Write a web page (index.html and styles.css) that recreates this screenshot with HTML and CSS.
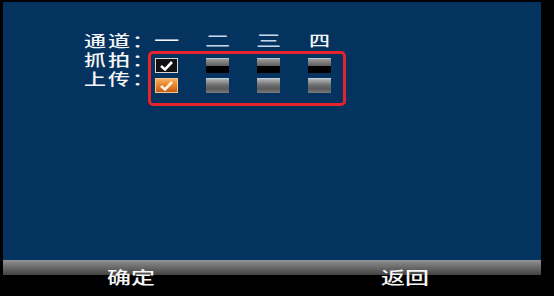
FILE: index.html
```html
<!DOCTYPE html>
<html lang="zh">
	<head>
		<meta charset="UTF-8">
		<title>抓拍设置</title>
		<link rel="stylesheet" href="styles.css">
	</head>
	<body>
	<div class="panel">
		<div class="row head">
			<span class="label"><span class="txt">通道：</span></span>
			<span class="cell"><span class="txt wide">一</span></span>
			<span class="cell"><span class="txt wide dim">二</span></span>
			<span class="cell"><span class="txt wide dim">三</span></span>
			<span class="cell"><span class="txt">四</span></span>
		</div>
		<div class="row snap">
			<span class="label"><span class="txt">抓拍：</span></span>
			<span class="cell"><span class="box on">
				<svg width="23" height="15" viewBox="0 0 23 15"><path d="M6 8 L10 11.5 L17 4" fill="none" stroke="#fff" stroke-width="2.6"/></svg>
			</span></span>
			<span class="cell"><span class="box off"></span></span>
			<span class="cell"><span class="box off"></span></span>
			<span class="cell"><span class="box off"></span></span>
		</div>
		<div class="row upload">
			<span class="label"><span class="txt">上传：</span></span>
			<span class="cell"><span class="box on">
				<svg width="23" height="15" viewBox="0 0 23 15"><path d="M6 8 L10 11.5 L17 4" fill="none" stroke="#fff4d8" stroke-width="2.6"/></svg>
			</span></span>
			<span class="cell"><span class="box off"></span></span>
			<span class="cell"><span class="box off"></span></span>
			<span class="cell"><span class="box off"></span></span>
		</div>
		<div class="mark"></div>
	</div>
	<div class="footer">
		<span class="txt">确定</span>
		<span class="txt">返回</span>
	</div>
	</body>
</html>
```

FILE: styles.css
```css
body {
	margin: 0;
	background-color: #000;
	font-family: "Noto Sans CJK SC", "Noto Sans", sans-serif;
	color: #f6f6f6;
}

.panel {
	position: relative;
	margin: 2px 0 0 3px;
	width: 538px;
	height: 258px;
	padding: 29px 0 0 81px;
	box-sizing: border-box;
	background-color: #04335f;
}

.row {
	display: flex;
	height: 19px;
}

.label {
	flex: 0 0 57px;
	min-width: 0;
	white-space: nowrap;
	font-size: 22px;
	line-height: 19px;
	letter-spacing: 2px;
	font-weight: 500;
}

.cell {
	flex: 0 0 51px;
	display: flex;
	justify-content: center;
	font-size: 21px;
	line-height: 19px;
	font-weight: 500;
}

.txt {
	display: inline-block;
	transform: scaleY(.7);
}

.wide {
	transform: scale(1.2, .7);
}

.dim {
	color: #c4d6ea;
}

.box {
	display: block;
	width: 23px;
	height: 15px;
	box-sizing: border-box;
	margin-top: 8px;
}

.box svg {
	display: block;
	margin: -1px;
}

.upload .box {
	margin-top: 9px;
}

.snap .box.on {
	background-color: #111;
	border: 1px solid #d8d8d8;
}

.snap .box.off {
	background: linear-gradient(#9a9a9a, #5c5c5c 50%, #000 50%, #000);
	border-top: 1px solid #b8c4d0;
}

.upload .box.on {
	background: linear-gradient(#f6b060, #e8862e 45%, #c85a18);
	border: 1px solid #f0c890;
}

.upload .box.off {
	background: linear-gradient(#b0b4b8, #6c6c6c 45%, #5a5a5a 70%, #7a7a7a);
	border-top: 1px solid #c0ccd8;
}

.mark {
	position: absolute;
	left: 145px;
	top: 49px;
	width: 198px;
	height: 55px;
	box-sizing: border-box;
	border: 3px solid #e5232b;
	border-radius: 5px;
}

.footer {
	width: 538px;
	margin-left: 3px;
	height: 36px;
	padding: 4px 0 0 104px;
	box-sizing: border-box;
	display: flex;
	gap: 226px;
	background: linear-gradient(#8c98a4, #8a8a8a 8%, #424242) top / 100% 15px no-repeat;
	font-size: 24px;
	line-height: 24px;
	font-weight: 500;
}

.footer .txt {
	transform: scaleY(.7);
}
```
